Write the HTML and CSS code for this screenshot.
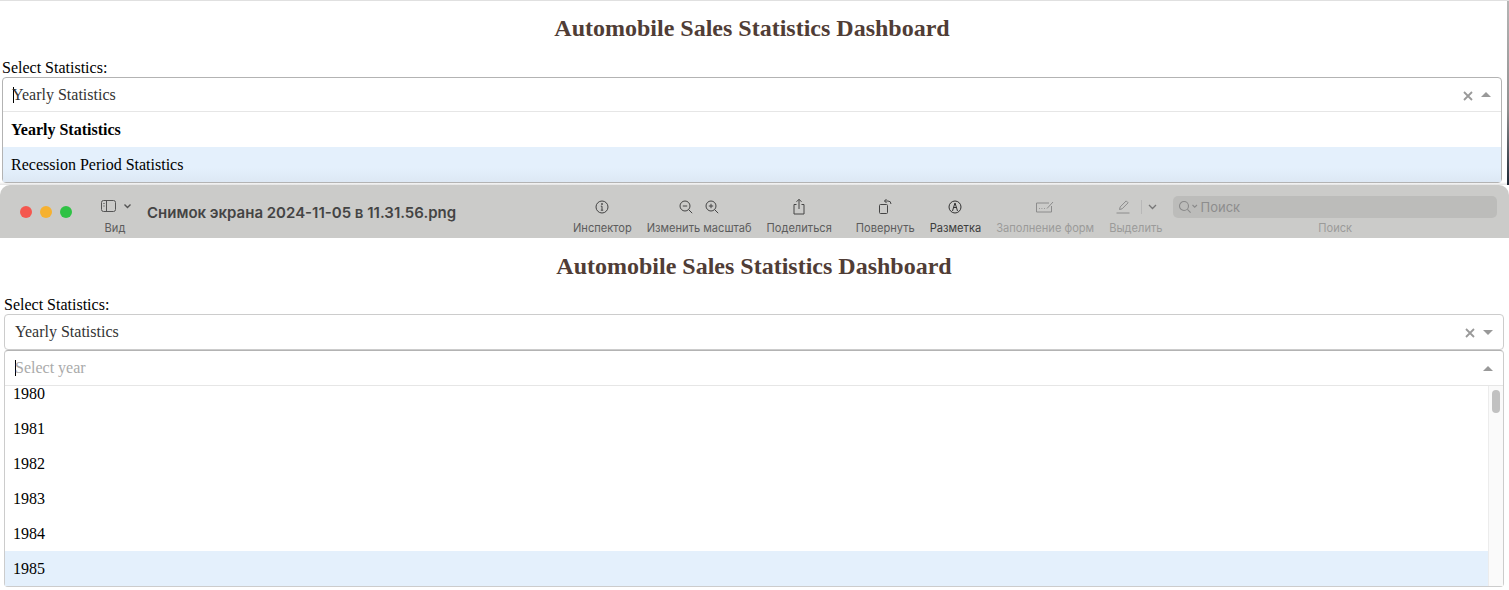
FILE: index.html
```html
<!DOCTYPE html>
<html>

<head>
  <title>Automobile Sales Statistics Dashboard</title>
  <link rel="stylesheet" href="styles.css">
</head>

<body>
  <!-- first dashboard capture -->
  <div class="shot shot-top">
    <h1 class="title">Automobile Sales Statistics Dashboard</h1>
    <div class="field-label">Select Statistics:</div>
    <div class="select is-open">
      <div class="control">
        <span class="caret"></span>
        <span class="value">Yearly Statistics</span>
        <svg class="clear" width="10" height="10" viewBox="0 0 10 10" fill="none" stroke="#999" stroke-width="1.8">
          <path d="M1 1l8 8M9 1l-8 8" />
        </svg>
        <span class="arrow arrow-up"></span>
      </div>
      <div class="menu">
        <div class="option selected">Yearly Statistics</div>
        <div class="option focused">Recession Period Statistics</div>
      </div>
    </div>
  </div>

  <!-- preview app toolbar -->
  <div class="toolbar">
    <div class="lights">
      <span class="light red"></span>
      <span class="light yellow"></span>
      <span class="light green"></span>
    </div>
    <div class="tool tool-view">
      <div class="icon">
        <svg width="32" height="16" viewBox="0 0 32 16" fill="none" stroke="#555" stroke-width="1">
          <rect x="2.5" y="1.5" width="14" height="11" rx="2" />
          <path d="M7.5 1.5v11M4.4 4.5h1.2M4.4 7h1.2" />
          <path d="M25.5 5.5l3 3 3-3" stroke-width="1.4" />
        </svg>
      </div>
      <div class="tool-label">Вид</div>
    </div>
    <div class="doc-name">Снимок экрана 2024-11-05 в 11.31.56.png</div>
    <div class="tools">
      <div class="tool">
        <div class="icon">
          <svg width="16" height="16" viewBox="0 0 16 16" fill="none" stroke="#444" stroke-width="1">
            <circle cx="8" cy="8" r="6" />
            <path d="M8 7.2v4M6.8 11.2h2.4M6.8 7.2H8" />
            <circle cx="8" cy="5" r="0.5" fill="#444" />
          </svg>
        </div>
        <div class="tool-label">Инспектор</div>
      </div>
      <div class="tool">
        <div class="icon icon-pair">
          <svg width="16" height="16" viewBox="0 0 16 16" fill="none" stroke="#444" stroke-width="1">
            <circle cx="7" cy="7" r="5" />
            <path d="M4.8 7h4.4M10.6 10.6l3.6 3.6" />
          </svg>
          <svg width="16" height="16" viewBox="0 0 16 16" fill="none" stroke="#444" stroke-width="1">
            <circle cx="7" cy="7" r="5" />
            <path d="M4.8 7h4.4M7 4.8v4.4M10.6 10.6l3.6 3.6" />
          </svg>
        </div>
        <div class="tool-label">Изменить масштаб</div>
      </div>
      <div class="tool tool-share">
        <div class="icon">
          <svg width="16" height="18" viewBox="0 0 16 18" fill="none" stroke="#444" stroke-width="1">
            <path d="M5.5 6.5H3v9.5h10V6.5h-2.5M8 11V1.5M5.5 3.8L8 1.3l2.5 2.5" />
          </svg>
        </div>
        <div class="tool-label">Поделиться</div>
      </div>
      <div class="tool">
        <div class="icon">
          <svg width="16" height="18" viewBox="0 0 16 18" fill="none" stroke="#444" stroke-width="1">
            <rect x="2.5" y="6.5" width="8" height="9" rx="1" />
            <path d="M7.5 3h3.5a3 3 0 0 1 3 3M9.5 1l-2 2 2 2" />
          </svg>
        </div>
        <div class="tool-label">Повернуть</div>
      </div>
      <div class="tool">
        <div class="icon">
          <svg width="16" height="16" viewBox="0 0 16 16" fill="none" stroke="#333" stroke-width="1">
            <circle cx="8" cy="8" r="6" />
            <path d="M5.5 12l1.2-4L8 4l1.3 4 1.2 4M6.7 8.5h2.6" />
          </svg>
        </div>
        <div class="tool-label label-dark">Разметка</div>
      </div>
      <div class="tool is-disabled">
        <div class="icon">
          <svg width="20" height="16" viewBox="0 0 20 16" fill="none" stroke="#8c8c8c" stroke-width="1">
            <path d="M14 4H1.5v9h15V7" />
            <path d="M4 9.5h.8M6.5 9.5h.8M9 9.5h.8M12 9.5l6-6.5" />
          </svg>
        </div>
        <div class="tool-label">Заполнение форм</div>
      </div>
      <div class="tool is-disabled">
        <div class="icon icon-mark">
          <svg width="16" height="16" viewBox="0 0 16 16" fill="none" stroke="#8c8c8c" stroke-width="1">
            <path d="M4.5 10.5l.7-2.6 6-6 1.9 1.9-6 6zM1.5 14h13" />
          </svg>
          <span class="mark-sep"></span>
          <svg width="9" height="6" viewBox="0 0 9 6" fill="none" stroke="#777" stroke-width="1.3">
            <path d="M1 1l3.5 3.5L8 1" />
          </svg>
        </div>
        <div class="tool-label">Выделить</div>
      </div>
    </div>
    <div class="search-wrap">
      <div class="search">
        <svg width="20" height="14" viewBox="0 0 20 14" fill="none" stroke="#8a8a8a" stroke-width="1.1">
          <circle cx="6" cy="6" r="4.5" />
          <path d="M9.4 9.4l3.2 3.2M14.5 5l2.2 2.2L19 5" />
        </svg>
        <span>Поиск</span>
      </div>
      <div class="tool-label search-label">Поиск</div>
    </div>
  </div>

  <!-- second dashboard capture -->
  <div class="shot shot-bottom">
    <h1 class="title">Automobile Sales Statistics Dashboard</h1>
    <div class="field-label">Select Statistics:</div>
    <div class="select">
      <div class="control control-closed">
        <span class="value value-plain">Yearly Statistics</span>
        <svg class="clear" width="10" height="10" viewBox="0 0 10 10" fill="none" stroke="#999" stroke-width="1.8">
          <path d="M1 1l8 8M9 1l-8 8" />
        </svg>
        <span class="arrow arrow-down"></span>
      </div>
    </div>
    <div class="select is-open">
      <div class="control">
        <span class="caret"></span>
        <span class="placeholder">Select year</span>
        <span class="arrow arrow-up"></span>
      </div>
      <div class="menu menu-scroll">
        <div class="year-list">
          <div class="option">1980</div>
          <div class="option">1981</div>
          <div class="option">1982</div>
          <div class="option">1983</div>
          <div class="option">1984</div>
          <div class="option focused">1985</div>
        </div>
        <div class="scrollbar"><span class="thumb"></span></div>
      </div>
    </div>
  </div>
</body>

</html>
```

FILE: styles.css
```css
body,
html {
  margin: 0;
  padding: 0;
}

body {
  width: 1509px;
  height: 590px;
  overflow: hidden;
  background: #fff;
  color: #000;
  font-family: "Liberation Serif", serif;
  font-size: 16px;
}

.shot {
  box-sizing: border-box;
}

.shot-top {
  height: 185px;
  padding: 1px 7px 0 2px;
  background:
    linear-gradient(#e0e0e0, #e0e0e0) top / 100% 1px no-repeat,
    linear-gradient(#b5b5b5, #8f8f8f 60%, #1d2735) right / 2px 100% no-repeat,
    linear-gradient(rgba(0, 0, 0, 0), #e2e2e2) bottom / 100% 3px no-repeat;
}

.shot-bottom {
  height: 352px;
  padding: 0 5px 0 4px;
}

.title {
  margin: 0;
  color: #503d36;
  font-size: 24px;
  line-height: 28px;
  font-weight: bold;
  text-align: center;
}

.shot-top .title {
  padding-top: 13px;
  padding-bottom: 17px;
}

.shot-bottom .title {
  padding-top: 14px;
  padding-bottom: 16px;
}

.field-label {
  height: 18px;
  line-height: 18px;
}

.select {
  border: 1px solid #b3b3b3;
  border-radius: 4px;
  background: #fff;
}

.shot-bottom .select {
  border-color: #ccc;
}

.shot-bottom .select + .select {
  border-top-color: #b3b3b3;
}

.control {
  display: flex;
  align-items: center;
  height: 34px;
  padding-left: 10px;
  color: #333;
}

.shot-top .control {
  height: 33px;
}

.caret {
  width: 1px;
  height: 16px;
  background: #000;
}

.value {
  margin-right: auto;
  margin-left: -2px;
}

.value-plain {
  margin-left: 0;
}

.placeholder {
  margin-right: auto;
  margin-left: -1px;
  color: #aaa;
}

.clear {
  margin-top: 2px;
}

.arrow {
  width: 0;
  height: 0;
  margin: 0 10px 0 8px;
  border-right: 5px solid transparent;
  border-left: 5px solid transparent;
}

.arrow-up {
  border-bottom: 5px solid #999;
}

.arrow-down {
  border-top: 5px solid #999;
}

.menu {
  border-top: 1px solid #e6e6e6;
}

.option {
  display: flex;
  align-items: center;
  height: 35px;
  padding-left: 8px;
}

.option.selected {
  font-weight: bold;
}

.option.focused {
  background: linear-gradient(#e4f0fc 60%, #dde8f4);
}

.menu-scroll {
  display: flex;
  height: 200px;
  overflow: hidden;
}

.year-list {
  flex: 1;
  margin-top: -10px; /* list is scrolled a little */
}

.menu-scroll .option.focused {
  background: #e4f0fc;
}

.scrollbar {
  box-sizing: border-box;
  width: 15px;
  padding: 4px 3px 0;
  border-left: 1px solid #ececec;
  background: #fafafa;
}

.thumb {
  display: block;
  width: 8px;
  height: 23px;
  border-radius: 4px;
  background: #c1c1c1;
}

/* toolbar */
.toolbar {
  display: flex;
  box-sizing: border-box;
  height: 53px;
  padding: 0 12px 0 20px;
  border-radius: 10px 10px 0 0;
  background: #cbcbc9;
  font-family: "Inter", "Noto Sans", sans-serif;
  color: #5c5c5c;
}

.lights {
  display: flex;
  gap: 8px;
  margin-top: 21px;
}

.light {
  width: 12px;
  height: 12px;
  border-radius: 50%;
}

.red {
  background: #f4574f;
}

.yellow {
  background: #f6b130;
}

.green {
  background: #2fc245;
}

.tool {
  display: flex;
  flex-direction: column;
  align-items: center;
}

.tool-view {
  width: 32px;
  margin-left: 27px;
}

.icon {
  display: flex;
  align-items: center;
  justify-content: center;
  gap: 10px;
  height: 18px;
  margin-top: 13px;
}

.icon-mark {
  gap: 0;
}

.tool-label {
  margin-top: 6px;
  font-size: 11.1px;
  line-height: 13px;
  white-space: nowrap;
}

.label-dark {
  color: #3c3c3c;
}

.doc-name {
  width: 426px;
  margin-top: 19px;
  margin-left: 16px;
  color: #444;
  font-size: 15px;
  font-weight: 600;
  line-height: 17px;
  white-space: nowrap;
}

.tools {
  display: flex;
  gap: 15px;
}

.tool-share {
  margin-right: 9px;
}

.is-disabled {
  color: #9b9b9a;
}

.mark-sep {
  height: 14px;
  margin: 0 6px 0 10px;
  border-left: 1px solid #b8b8b8;
}

.search-wrap {
  display: flex;
  flex-direction: column;
  align-items: center;
  flex: 1;
  margin-left: 11px;
}

.search {
  display: flex;
  align-items: center;
  gap: 2px;
  box-sizing: border-box;
  width: 100%;
  height: 22px;
  margin-top: 11px;
  padding-left: 5px;
  border-radius: 5px;
  background: #bcbcba;
  color: #8d8d8d;
  font-size: 13px;
}

.search-label {
  margin-top: 4px;
  color: #9b9b9a;
}
```
